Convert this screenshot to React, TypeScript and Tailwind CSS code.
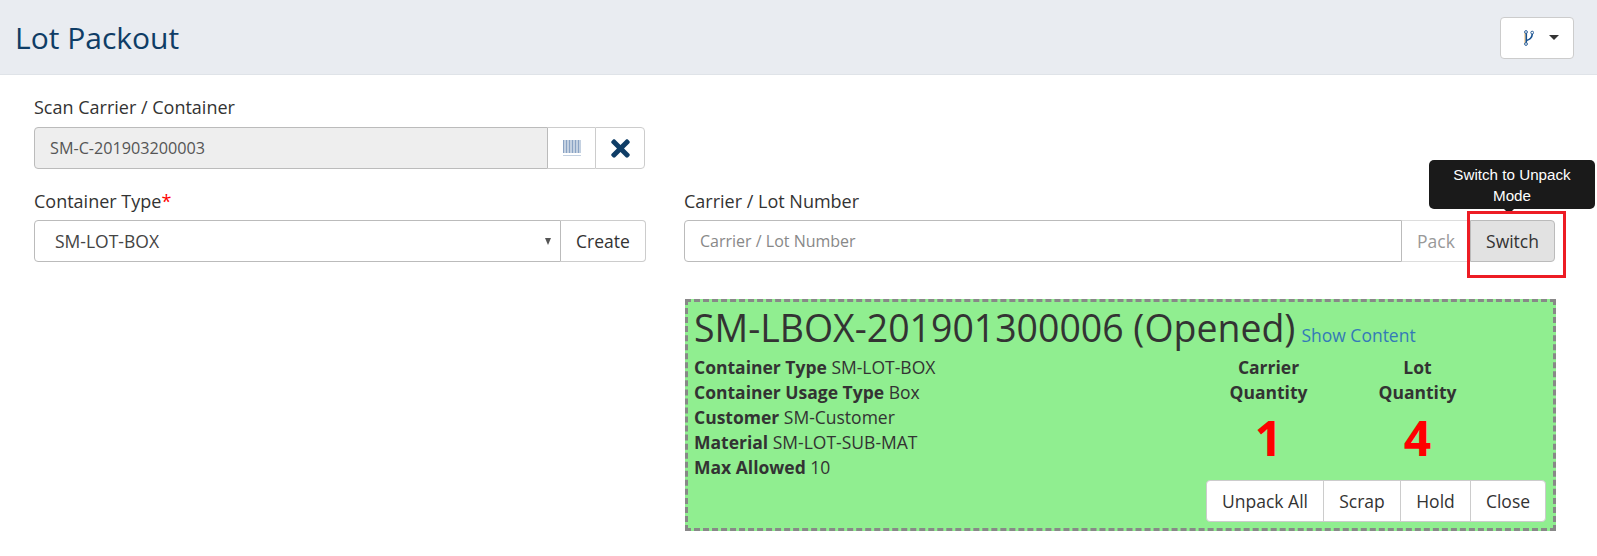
import { FaTimes } from "react-icons/fa"

function BranchIcon() {
  return (
    <svg width="10" height="16" viewBox="0 0 10 16" fill="none" className="block">
      <path d="M1 2.5V14" stroke="#f0b35a" strokeWidth="1" />
      <path d="M2.3 2.5V14" stroke="#16508f" strokeWidth="1.6" />
      <path d="M2.5 10.5C6 9.5 8 8 8.3 4" stroke="#16508f" strokeWidth="1.6" />
      <circle cx="2" cy="2" r="1.4" fill="#fff" stroke="#16508f" strokeWidth="0.9" />
      <circle cx="2" cy="14" r="1.4" fill="#fff" stroke="#16508f" strokeWidth="0.9" />
      <circle cx="8.2" cy="2.6" r="1.4" fill="#fff" stroke="#16508f" strokeWidth="0.9" />
    </svg>
  )
}

function BarcodeIcon() {
  const bars = [0, 1.5, 3, 4.5, 6, 7.5, 9, 10.5, 12, 13.5, 15, 16.5]
  return (
    <svg width="18" height="16" viewBox="0 0 18 16" className="block">
      {bars.map((x) => (
        <rect key={x} x={x} y="0" width="1" height="13" fill="#8aa3c4" />
      ))}
      <rect x="0" y="15" width="18" height="1" fill="#c3d0e0" />
    </svg>
  )
}

function Detail({ label, value }: { label: string; value: string }) {
  return (
    <div>
      <b className="font-bold">{label}</b> {value}
    </div>
  )
}

function Quantity({ label, value }: { label: string; value: number }) {
  return (
    <div className="w-[149px] flex flex-col items-center text-center">
      <div className="w-[90px] font-bold leading-[25px]">{label}</div>
      <div className="mt-[4px] text-[48px] leading-[58px] font-bold text-[#ff0000]">{value}</div>
    </div>
  )
}

export default function App() {
  return (
    <div className="h-[556px] bg-white text-[17.5px] text-[#333] overflow-hidden relative font-['Open_Sans',sans-serif]">
      {/* Header */}
      <div className="h-[75px] pt-px bg-[#e9ecf1] border-b border-[#dfe3e8] flex items-center justify-between pl-[15px] pr-[23px]">
        <h1 className="text-[30px] leading-[40px] text-[#0f3d66]">Lot Packout</h1>
        <button className="w-[74px] h-[42px] pl-[23px] bg-white border border-[#ccc] rounded-[4px] flex items-center gap-[15px]">
          <BranchIcon />
          <span className="border-x-[5px] border-x-transparent border-t-[5px] border-t-[#333]" />
        </button>
      </div>

      <div className="pl-[34px] pr-[42px] pt-[21px]">
        {/* Scan row */}
        <div className="w-[611px]">
          <label className="block font-medium text-[18px] leading-[22px] mb-[9px]">Scan Carrier / Container</label>
          <div className="flex h-[42px]">
            <div className="w-[514px] bg-[#eee] border border-[#bbb] rounded-l-[4px] pl-[15px] flex items-center text-[16.2px] text-[#555]">
              SM-C-201903200003
            </div>
            <div className="w-[47px] border-y border-[#ccc] flex items-center justify-center">
              <BarcodeIcon />
            </div>
            <div className="w-[50px] border border-[#ccc] rounded-r-[4px] flex items-center justify-center text-[#0f3d66] text-[27px]">
              <FaTimes />
            </div>
          </div>
        </div>

        <div className="flex justify-between mt-[21px]">
          {/* Container type */}
          <div className="w-[612px]">
            <label className="block font-medium text-[18px] leading-[22px] mb-[8px]">
              Container Type<span className="text-[#ff0000]">*</span>
            </label>
            <div className="flex h-[42px]">
              <div className="w-[527px] border border-[#bbb] rounded-l-[4px] pl-[20px] pr-[9px] flex items-center justify-between text-[#444]">
                SM-LOT-BOX
                <span className="border-x-[3.5px] border-x-transparent border-t-[7px] border-t-[#555]" />
              </div>
              <div className="flex-1 border border-l-0 border-[#ccc] rounded-r-[4px] flex items-center justify-center">
                Create
              </div>
            </div>
          </div>

          {/* Carrier + card */}
          <div className="w-[871px]">
            <label className="block font-medium text-[18px] leading-[22px] mb-[8px]">Carrier / Lot Number</label>
            <div className="flex h-[42px]">
              <div className="w-[718px] border border-[#bbb] rounded-l-[4px] pl-[15px] flex items-center text-[16px] text-[#888]">
                Carrier / Lot Number
              </div>
              <div className="w-[68px] border-y border-[#ddd] flex items-center justify-center text-[#999]">Pack</div>
              <div className="w-[85px] bg-[#e2e2e2] border border-[#bbb] rounded-r-[4px] flex items-center justify-center">
                Switch
              </div>
            </div>

            <div className="mt-[37px] ml-[1px] mr-[-1px] h-[232px] bg-[#90ee90] border-[3px] border-dashed border-[#888] px-[6px]">
              <div className="flex items-baseline gap-[6px] h-[53px] pt-px">
                <span className="text-[37.45px] leading-[50px]">SM-LBOX-201901300006 (Opened)</span>
                <a className="text-[#337ab7]">Show Content</a>
              </div>
              <div className="flex leading-[25px]">
                <div className="w-[500px]">
                  <Detail label="Container Type" value="SM-LOT-BOX" />
                  <Detail label="Container Usage Type" value="Box" />
                  <Detail label="Customer" value="SM-Customer" />
                  <Detail label="Material" value="SM-LOT-SUB-MAT" />
                  <Detail label="Max Allowed" value="10" />
                </div>
                <Quantity label="Carrier Quantity" value={1} />
                <Quantity label="Lot Quantity" value={4} />
              </div>
              <div className="flex justify-end mr-[1px]">
                <div className="flex h-[42px] bg-white border border-[#ccc] rounded-[4px] divide-x divide-[#ccc]">
                  <div className="w-[117px] flex items-center justify-center">Unpack All</div>
                  <div className="w-[77px] flex items-center justify-center">Scrap</div>
                  <div className="w-[70px] flex items-center justify-center">Hold</div>
                  <div className="w-[74px] flex items-center justify-center">Close</div>
                </div>
              </div>
            </div>
          </div>
        </div>
      </div>

      {/* Tooltip and annotation over the switch button */}
      <div className="absolute left-[1429px] top-[160px] w-[166px] h-[49px] px-[15px] bg-[#1a1a1a] rounded-[5px] text-white text-center text-[15.2px] leading-[21px] pt-[4px] font-['Liberation_Sans',sans-serif]">
        Switch to Unpack Mode
        <span className="absolute left-[75px] top-[49px] border-x-[5px] border-x-transparent border-t-[5px] border-t-[#1a1a1a]" />
      </div>
      <div className="absolute left-[1467px] top-[211px] w-[99px] h-[67px] border-[3px] border-[#ed1c24]" />
    </div>
  )
}
